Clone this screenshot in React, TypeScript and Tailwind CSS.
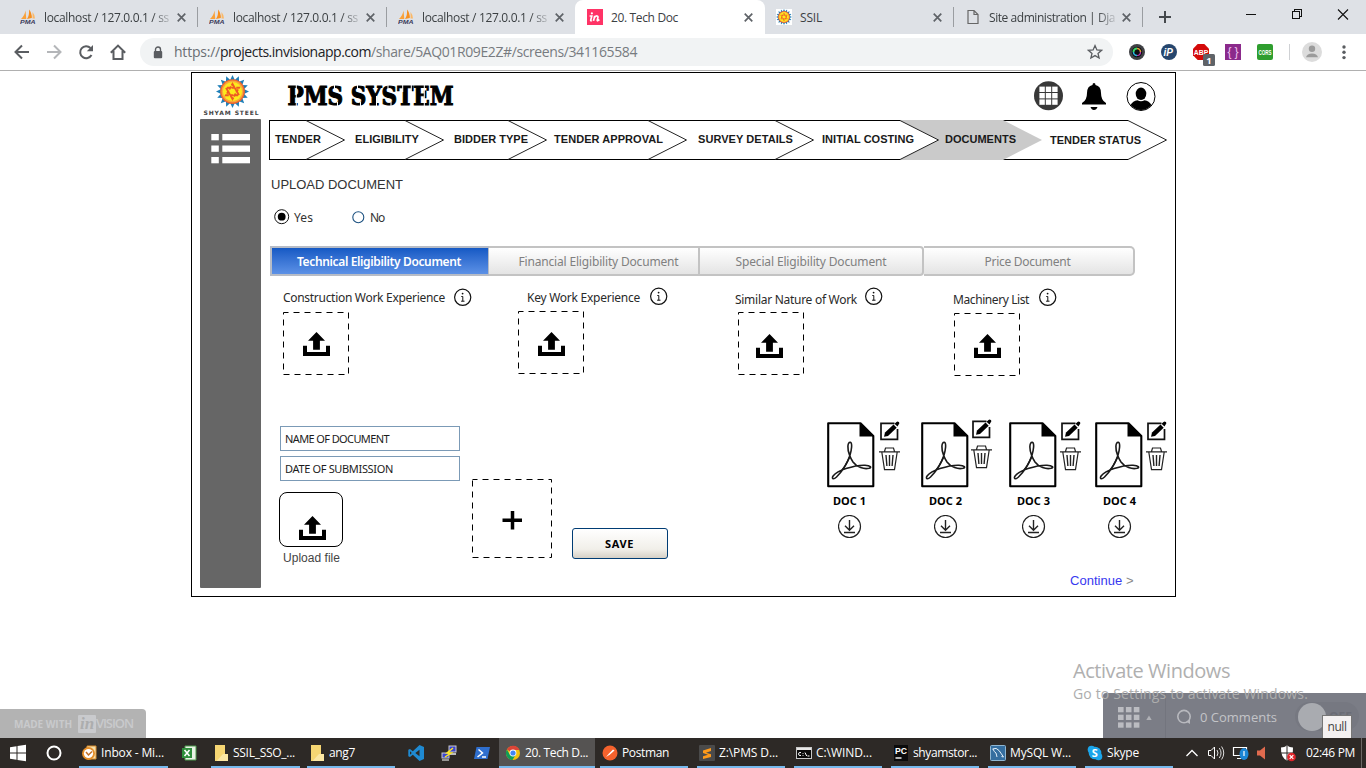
import React, { useLayoutEffect, useRef, useState } from "react";

const OPEN = "font-['Open_Sans','Noto_Sans',sans-serif]";
const NOTO = "font-['Noto_Sans','Open_Sans',sans-serif]";
const ARIAL = "font-['Liberation_Sans',Arial,sans-serif]";

/* Single-line text whose tracking is adjusted so that it fills a given width. */
function Fit({ w, className = "", children }: { w: number; className?: string; children: string }) {
  const ref = useRef<HTMLSpanElement>(null);
  const [gap, setGap] = useState(0);
  useLayoutEffect(() => {
    if (ref.current) {
      const natural = ref.current.getBoundingClientRect().width;
      setGap((w - natural) / Math.max(1, children.length));
    }
  }, [w, children]);
  return (
    <span className={`inline-block shrink-0 overflow-visible whitespace-pre ${className}`} style={{ width: w }}>
      <span ref={ref} style={{ letterSpacing: gap }}>
        {children}
      </span>
    </span>
  );
}

/* ---------- browser chrome ---------- */

function PmaIcon() {
  return (
    <svg width="16" height="16" viewBox="0 0 16 16" className="shrink-0">
      <path d="M5.500 1.500L6.300 10H1Q4.500 7 5.500 1.500z" fill="#f9a13a" />
      <path d="M9 .5Q12 4 11.800 9L7 10Q9.600 6 9 .5z" fill="#f78f1e" />
      <path d="M12.500 3Q15 6 15 9.500L12.600 9.500z" fill="#fbb867" />
      <text x="0" y="15.300" fontSize="6" fontWeight="bold" fontStyle="italic" fill="#3b3a5b" textLength="15.500" lengthAdjust="spacingAndGlyphs" fontFamily="Liberation Sans">
        PMA
      </text>
    </svg>
  );
}

function SunIcon({ size }: { size: number }) {
  const rays = Array.from({ length: 16 }, (_, i) => i * 22.5);
  return (
    <svg width={size} height={size} viewBox="0 0 32 32" className="shrink-0">
      {rays.map((a) => (
        <path key={a} d="M13.400 5.500L16 0L18.600 5.500z" fill="#1e7fb8" transform={`rotate(${a} 16 16)`} />
      ))}
      <circle cx="16" cy="16" r="12" fill="#f0642c" />
      <circle cx="16" cy="16" r="10.600" fill="#f7a83b" />
      <circle cx="16" cy="16" r="9.300" fill="#fdea1c" />
      <path d="M16 8.700L22.300 19.600H9.700zM16 23.300L9.700 12.400H22.300z" fill="none" stroke="#ee5a24" strokeWidth="1.800" strokeDasharray="3.500 1" />
    </svg>
  );
}

function InIcon() {
  return (
    <svg width="16" height="16" viewBox="0 0 16 16" className="shrink-0">
      <rect width="16" height="16" fill="#ff3366" />
      <circle cx="4.900" cy="4.300" r="1.100" fill="#fff" />
      <path d="M2.600 7h2.200l-1.100 4.200q-.2 1.100 1.100.1M7.700 6.900l-1.200 5M7 9.500q1.300-2.900 3.200-2.500 1.200.3.500 2.500l-.5 1.800q0 1.200 2.200-.6" fill="none" stroke="#fff" strokeWidth="1.700" />
    </svg>
  );
}

function FileIcon() {
  return (
    <svg width="16" height="16" viewBox="0 0 16 16" className="shrink-0">
      <path d="M3 1.500h6l4 4v9H3zM9 1.500v4h4" fill="none" stroke="#666" strokeWidth="1.200" />
    </svg>
  );
}

function CloseX() {
  return (
    <svg width="9" height="9" viewBox="0 0 10 10" className="shrink-0">
      <path d="M.8.8l8.400 8.400M9.200.8L.8 9.200" stroke="#5f6368" strokeWidth="1.900" />
    </svg>
  );
}

interface TabData {
  icon: React.ReactNode;
  text: string;
  w: number;
  active?: boolean;
  sep?: boolean;
  fade?: boolean;
}

function Tab({ icon, text, w, active, sep, fade }: TabData) {
  return (
    <div
      className={`-mr-px flex h-[34px] w-[190px] shrink-0 items-center pl-3 ${active ? "rounded-t-lg bg-white" : ""} ${
        sep ? "bg-[linear-gradient(#9a9da1,#9a9da1)] bg-[length:1px_20px] bg-[position:right_7px] bg-no-repeat" : ""
      }`}
    >
      {icon}
      <div className={`ml-2 w-[126px] overflow-hidden pb-[2px] ${fade ? "[mask-image:linear-gradient(to_right,#000_108px,transparent_130px)]" : ""}`}>
        <Fit w={w} className="text-[12px] leading-[20px] text-[#3c4043]">
          {text}
        </Fit>
      </div>
      <div className="ml-[7px] flex">
        <CloseX />
      </div>
    </div>
  );
}

function TabStrip() {
  const pma = { icon: <PmaIcon />, text: "localhost / 127.0.0.1 / ss", w: 125, fade: true };
  return (
    <div className={`flex h-[34px] bg-[#dee1e6] pl-2 ${OPEN}`}>
      <Tab {...pma} sep />
      <Tab {...pma} sep />
      <Tab {...pma} />
      <Tab icon={<InIcon />} text="20. Tech Doc" w={67} active />
      <Tab icon={<div className="flex bg-white"><SunIcon size={16} /></div>} text="SSIL" w={22} sep />
      <Tab icon={<FileIcon />} text="Site administration | Dja" w={126} sep fade />
      <svg width="224" height="34" viewBox="1142 0 224 34" fill="none">
        <path d="M1165 11v12M1159 17h12" stroke="#45494d" strokeWidth="2" />
        <g stroke="#111" strokeWidth="1" shapeRendering="crispEdges">
          <path d="M1246 14.500h10" />
          <path d="M1292.500 11.500h7v7h-7zM1294.500 11.500v-2h7v7h-2" />
        </g>
        <path d="M1338 9.500l10 10M1348 9.500l-10 10" stroke="#111" strokeWidth="1.100" />
      </svg>
    </div>
  );
}

function Toolbar() {
  return (
    <div className={`flex h-[37px] items-center border-b border-[#b0b0b0] bg-white ${OPEN}`}>
      <svg width="140" height="36" viewBox="0 34 140 36" fill="none" strokeWidth="2" className="shrink-0">
        <path d="M29 52H16M22 45.500L15.500 52l6.500 6.500" stroke="#5a5d61" />
        <path d="M47 52h13M54 45.500L60.500 52l-6.500 6.500" stroke="#b4b6b9" />
        <path d="M91.500 55A6 6 0 1 1 90.500 48" stroke="#5a5d61" />
        <path d="M93 45v6.200h-6.200z" fill="#5a5d61" />
        <path d="M110.800 52.800L118 45.600l7.200 7.200M113.500 51v8h9v-8" stroke="#5a5d61" />
      </svg>
      <div className="flex h-7 w-[973px] shrink-0 items-center rounded-full bg-[#f1f3f4] pl-[13px]">
        <svg width="10" height="13" viewBox="0 0 10 13">
          <path d="M2.500 5.500V3.500a2.500 2.500 0 0 1 5 0v2" fill="none" stroke="#5a5d61" strokeWidth="1.400" />
          <rect x=".8" y="5" width="8.400" height="7.300" rx="1" fill="#5a5d61" />
        </svg>
        <div className="ml-[11px] flex text-[14px] leading-[20px]">
          <Fit w={46} className="text-[#6a6e73]">https://</Fit>
          <Fit w={151} className="text-[#202124]">projects.invisionapp.com</Fit>
          <Fit w={266} className="text-[#777b80]">/share/5AQ01R09E2Z#/screens/341165584</Fit>
        </div>
        <svg width="16" height="16" viewBox="0 0 16 16" className="mr-[10px] ml-auto">
          <path d="M8 1.600l1.900 4.300 4.700.4-3.600 3.100 1.100 4.600L8 11.600 3.900 14 5 9.400 1.400 6.300l4.700-.4z" fill="none" stroke="#5a5d61" strokeWidth="1.300" />
        </svg>
      </div>
      <svg width="253" height="36" viewBox="1113 34 253 36" className="shrink-0">
        <circle cx="1137" cy="52" r="8" fill="#3f4044" />
        <circle cx="1137" cy="52" r="5.200" fill="#0c0c10" />
        <path d="M1133.500 52a3.500 3.500 0 0 1 3.500-3.500" stroke="#3ad86a" strokeWidth="2" fill="none" />
        <path d="M1137 48.500a3.500 3.500 0 0 1 3.500 3.500" stroke="#e3a13a" strokeWidth="1.600" fill="none" />
        <path d="M1133.500 52a3.500 3.500 0 0 0 3.500 3.500" stroke="#2ab6e0" strokeWidth="1.600" fill="none" />
        <path d="M1137 55.500a3.500 3.500 0 0 0 3.500-3.500" stroke="#c13ab8" strokeWidth="1.200" fill="none" />
        <circle cx="1169" cy="52" r="8" fill="#26466d" />
        <text x="1163.500" y="56" fontSize="10" fontWeight="bold" fontStyle="italic" fill="#fff" fontFamily="Liberation Sans">iP</text>
        <path d="M1197.700 44h6.600l4.700 4.700v6.600l-4.700 4.700h-6.600l-4.700-4.700v-6.600z" fill="#d40a0a" />
        <text x="1193.800" y="55" fontSize="8" fontWeight="bold" fill="#fff" textLength="14.500" lengthAdjust="spacingAndGlyphs" fontFamily="Liberation Sans">ABP</text>
        <rect x="1203" y="54" width="12" height="12" rx="1.500" fill="#5f6368" />
        <text x="1206.200" y="63.500" fontSize="9.500" fontWeight="bold" fill="#fff" fontFamily="Open Sans">1</text>
        <rect x="1225" y="44" width="16" height="16" fill="#8b2a8b" />
        <text x="1227.500" y="56" fontSize="12" fill="#eec3ee" textLength="11" fontFamily="Liberation Sans">{"{}"}</text>
        <rect x="1257" y="44" width="16" height="16" rx="2" fill="#2f9e2f" />
        <text x="1258.500" y="54.500" fontSize="7" fontWeight="bold" fill="#fff" textLength="13" lengthAdjust="spacingAndGlyphs" fontFamily="Liberation Sans">CORS</text>
        <path d="M1289.500 44v16" stroke="#cfd1d4" />
        <circle cx="1312" cy="52" r="10" fill="#dcdcdc" />
        <circle cx="1312" cy="48.700" r="3.200" fill="#9b9b9b" />
        <path d="M1306 57.300q1-3.800 6-3.800t6 3.800z" fill="#9b9b9b" />
        <g fill="#5a5d61">
          <circle cx="1344" cy="47" r="1.700" />
          <circle cx="1344" cy="52.300" r="1.700" />
          <circle cx="1344" cy="57.600" r="1.700" />
        </g>
      </svg>
    </div>
  );
}

/* ---------- prototype page ---------- */

function Wordmark() {
  return (
    <svg width="180" height="26" viewBox="0 0 180 26">
      <text
        x="0.500"
        y="22"
        fontFamily="DejaVu Serif, serif"
        fontWeight="bold"
        fontSize="26"
        stroke="#000"
        strokeWidth="1.100"
        textLength="166"
        lengthAdjust="spacingAndGlyphs"
      >
        PMS SYSTEM
      </text>
      <g stroke="#fff" strokeWidth="1">
        <path d="M9.300 1v23M47.500 1v5M50.500 19v5M70.500 1v5M73.500 19v5M89.500 13v11M101 1v5M104 19v5M115.700 1v8M124.300 1v8M137.300 1v23" />
      </g>
    </svg>
  );
}

function HeaderIcons() {
  return (
    <div className="mr-[19px] ml-auto flex">
      <svg width="30" height="30" viewBox="0 0 30 30">
        <circle cx="14.500" cy="14.700" r="14.500" fill="#383838" />
        <g fill="#fff">
          {[5.600, 12, 18.400].map((y) => [5.400, 11.800, 18.200].map((x) => <rect key={`${x}-${y}`} x={x} y={y} width="5.400" height="5.400" />))}
        </g>
      </svg>
      <svg width="24" height="28" viewBox="0 0 24 28" className="mt-[2px] ml-[18px]">
        <path d="M12 0q1.500 0 1.500 2 5.500 1.200 5.500 8 0 7.500 5 10v1.500H0V20q5-2.500 5-10 0-6.800 5.500-8 0-2 1.500-2zM8.500 24h7q-1 3-3.500 3t-3.500-3z" />
      </svg>
      <svg width="30" height="30" viewBox="0 0 30 30" className="mt-[1px] ml-[20px]">
        <circle cx="15" cy="14.500" r="14" fill="#fff" stroke="#000" strokeWidth="1" />
        <ellipse cx="15" cy="11.800" rx="5.300" ry="6.200" />
        <path d="M4.500 23q2.300-4 7-4.800 3.500 2 7 0 4.700.8 7 4.800-4.300 5-10.500 5T4.500 23z" />
      </svg>
    </div>
  );
}

interface StepData {
  label: string;
  w: string;
  pad: string;
  tw: number;
  kind?: "current" | "after" | "first";
}

const STEPS: StepData[] = [
  { label: "TENDER", w: "w-[37px]", pad: "pl-[5px]", tw: 46, kind: "first" },
  { label: "ELIGIBILITY", w: "w-[99px]", pad: "pl-[10px]", tw: 64 },
  { label: "BIDDER TYPE", w: "w-[103px]", pad: "pl-[10px]", tw: 74 },
  { label: "TENDER APPROVAL", w: "w-[140px]", pad: "pl-[7px]", tw: 109 },
  { label: "SURVEY DETAILS", w: "w-[127px]", pad: "pl-[11px]", tw: 95 },
  { label: "INITIAL COSTING", w: "w-[125px]", pad: "pl-[8px]", tw: 92 },
  { label: "DOCUMENTS", w: "w-[103px]", pad: "pl-[6px]", tw: 71, kind: "current" },
  { label: "TENDER STATUS", w: "w-[125px]", pad: "pl-[8px]", tw: 91, kind: "after" },
];

function Steps() {
  return (
    <div className={`flex h-10 pl-2 text-[11px] font-bold text-[#1a1a1a] ${ARIAL}`}>
      {STEPS.map((s) => (
        <div
          key={s.label}
          className={`box-border flex h-10 shrink-0 items-center ${s.w} ${
            s.kind === "current" ? "bg-[#cacaca]" : "bg-[linear-gradient(#000,#000),linear-gradient(#000,#000)] bg-[length:100%_1px] bg-[position:0_0,0_100%] bg-no-repeat"
          } ${s.kind === "first" ? "border-l border-black" : ""}`}
        >
          {s.kind !== "first" && (
            <svg width="39" height="40" viewBox="0 0 39 40" className="shrink-0">
              {s.kind === "after" ? (
                <path d="M0 0L39 20L0 40z" fill="#cacaca" />
              ) : (
                <path d="M0 .5L38.500 20L0 39.500" fill={s.kind === "current" ? "#fff" : "none"} stroke="#222" strokeWidth="1" />
              )}
            </svg>
          )}
          <div className={`relative z-10 ${s.pad} ${s.kind === "after" ? "" : "pb-[1px]"}`}>
            <Fit w={s.tw} className="leading-[14px]">
              {s.label}
            </Fit>
          </div>
        </div>
      ))}
      <svg width="39" height="40" viewBox="0 0 39 40" className="shrink-0">
        <path d="M0 .5L38.500 20L0 39.500" fill="none" stroke="#222" />
      </svg>
    </div>
  );
}

function DocTabs() {
  const tab = "flex h-[30px] items-center justify-center border-y-2 border-r-2 border-[#c3c3c3] bg-linear-to-b from-white to-[#e4e4e4] pt-[2px] text-[#808080]";
  return (
    <div className={`ml-[9px] flex h-[30px] text-[12px] leading-[16px] ${NOTO}`}>
      <div className="flex h-[30px] w-[219px] items-center justify-center border-2 border-r border-[#b7bcc6] bg-linear-to-b from-[#1459c4] to-[#5c91e6] pt-[2px] pr-[2px] text-white">
        <Fit w={164} className="font-semibold">Technical Eligibility Document</Fit>
      </div>
      <div className={`${tab} w-[211px] pl-[10px]`}>
        <Fit w={160}>Financial Eligibility Document</Fit>
      </div>
      <div className={`${tab} w-[224px] rounded-r-[4px]`}>
        <Fit w={151}>Special Eligibility Document</Fit>
      </div>
      <div className={`${tab} w-[211px] rounded-r-[5px] pr-[2px]`}>
        <Fit w={86}>Price Document</Fit>
      </div>
    </div>
  );
}

function InfoIcon() {
  return (
    <svg width="18" height="18" viewBox="0 0 18 18" className="shrink-0">
      <circle cx="8.700" cy="9.300" r="8.100" fill="none" stroke="#111" strokeWidth="1.200" />
      <circle cx="8.600" cy="5.600" r=".9" fill="#111" />
      <path d="M7.300 8.500h1.500v4.700M7.100 13.200h3.400" fill="none" stroke="#111" strokeWidth="1" />
    </svg>
  );
}

function UploadIcon() {
  return (
    <svg width="27" height="24" viewBox="0 0 27 24" className="shrink-0">
      <path d="M13.500 0L22 8.700H16.900V17.800H10.100V8.700H5z" />
      <path d="M0 13.700h4v6.300h19v-6.300h4V24H0z" />
    </svg>
  );
}

function Dashed({ w, h }: { w: number; h: number }) {
  return (
    <svg width={w} height={h} className="absolute inset-0">
      <path d={`M.5 .5H${w - 0.5}V${h - 0.5}H.5z`} fill="none" stroke="#000" strokeDasharray="6 5" strokeDashoffset="1" />
    </svg>
  );
}

interface SlotData {
  label: string;
  tw: number;
  cell: string;
  text: string;
  info: string;
  box: string;
  icon: string;
}

const SLOTS: SlotData[] = [
  { label: "Construction Work Experience", tw: 162, cell: "w-[235px]", text: "mt-[3px]", info: "mt-[2px] ml-[9px]", box: "mt-[6px]", icon: "mt-[20px] ml-[20px]" },
  { label: "Key Work Experience", tw: 113, cell: "w-[217px]", text: "mt-[3px] ml-[9px]", info: "mt-[1px] ml-[10px]", box: "mt-[5px]", icon: "mt-[21px] ml-[20px]" },
  { label: "Similar Nature of Work", tw: 122, cell: "w-[218px]", text: "mt-[5px]", info: "mt-[1px] ml-[8px]", box: "mt-[6px] ml-[3px]", icon: "mt-[22px] ml-[18px]" },
  { label: "Machinery List", tw: 76, cell: "w-[200px]", text: "mt-[5px]", info: "mt-[2px] ml-[10px]", box: "mt-[7px] ml-[1px]", icon: "mt-[21px] ml-[20px]" },
];

function Slots() {
  return (
    <div className={`mt-[10px] ml-[22px] flex h-[92px] text-[12px] leading-[18px] text-[#2a2a2a] ${NOTO}`}>
      {SLOTS.map((s) => (
        <div key={s.label} className={`shrink-0 ${s.cell}`}>
          <div className="flex h-[20px] items-start">
            <Fit w={s.tw} className={s.text}>
              {s.label}
            </Fit>
            <div className={`flex ${s.info}`}>
              <InfoIcon />
            </div>
          </div>
          <div className={`relative flex h-[63px] w-[66px] ${s.box}`}>
            <Dashed w={66} h={63} />
            <div className={s.icon}>
              <UploadIcon />
            </div>
          </div>
        </div>
      ))}
    </div>
  );
}

function PdfIcon() {
  return (
    <svg width="48" height="66" viewBox="0 0 48 66" fill="none" className="shrink-0">
      <path d="M1.200 1.200H33.500L46.300 14V64.300H1.200z" stroke="#000" strokeWidth="2.100" strokeLinejoin="round" />
      <path d="M32.500 1L47 14.500H32.500z" fill="#000" />
      <path
        d="M22.500 33C20.200 27 20.300 20 23.300 20.200C25.600 20.800 24.600 28 22.900 33.500C20 42 14.500 50 9.500 55C6 58.300 4.300 56.500 6.300 53.800C9 50.500 14 48.300 19 46.600C26 44.300 33 43 38 43.200C43.500 43.500 45.300 45.500 42 46.300C37 47.300 30 45.500 26 40C24 37 23.200 35 22.500 33z"
        stroke="#1a1a1a"
        strokeWidth="1.600"
      />
      <path d="M22.500 35.500q-3.500 8-8.500 14" stroke="#1a1a1a" strokeWidth="1.600" />
    </svg>
  );
}

function EditIcon() {
  return (
    <svg width="21" height="20" viewBox="0 0 21 20" fill="none">
      <path d="M14.500 2.300H1V18.300H17.500V8" stroke="#111" strokeWidth="1.700" />
      <path d="M5 11.600L13.500 3.500l3.200 3.200L8 15 4 15.800z" fill="#000" />
      <path d="M14.500 2.700L16.500 .9q1.200-1 2.300.2 1 1.200 0 2.200L17.500 5.600z" fill="#000" />
    </svg>
  );
}

function TrashIcon() {
  return (
    <svg width="21" height="24" viewBox="0 0 21 24" fill="none" stroke="#222" strokeWidth="1.200">
      <path d="M0 4.800H21M5.500 4.500L6.500 1h8l1 3.500M2.800 5L5.500 22.700H15.500L18.200 5" />
      <path d="M7 8l.9 11M10.500 8v11M14 8l-.9 11" strokeWidth="1.400" />
    </svg>
  );
}

function DownloadIcon() {
  return (
    <svg width="24" height="24" viewBox="0 0 24 24" fill="none" stroke="#222" strokeWidth="1.200">
      <circle cx="11.500" cy="11.500" r="11" />
      <path d="M11.500 5v10M7 10.700l4.500 4.500 4.500-4.500M6 17.500h11" strokeWidth="1.400" />
    </svg>
  );
}

const DOCS = [
  { name: "DOC 1", w: "w-[94px]", act: "ml-[4px]", lift: "", tx: "pl-[6px]", dx: "pl-[11px]" },
  { name: "DOC 2", w: "w-[88px]", act: "ml-[2px]", lift: "-mt-[2px]", tx: "pl-[8px]", dx: "pl-[13px]" },
  { name: "DOC 3", w: "w-[86px]", act: "ml-[3px]", lift: "", tx: "pl-[8px]", dx: "pl-[13px]" },
  { name: "DOC 4", w: "w-[80px]", act: "ml-[3px]", lift: "", tx: "pl-[8px]", dx: "pl-[13px]" },
];

function Docs() {
  return (
    <div className={`flex ${NOTO}`}>
      {DOCS.map((d) => (
        <div key={d.name} className={`shrink-0 ${d.w}`}>
          <div className="flex h-[66px]">
            <PdfIcon />
            <div className={`flex flex-col ${d.act} ${d.lift}`}>
              <div className="-mt-[1px] ml-[1px] h-[26px]">
                <EditIcon />
              </div>
              <TrashIcon />
            </div>
          </div>
          <div className={`mt-[4px] flex h-[18px] items-center ${d.tx}`}>
            <Fit w={33} className="text-[11px] leading-[18px] font-bold">
              {d.name}
            </Fit>
          </div>
          <div className={`mt-[5px] ${d.dx}`}>
            <DownloadIcon />
          </div>
        </div>
      ))}
    </div>
  );
}

function Form() {
  const field = "flex h-[25px] w-[180px] items-center border border-[#7b9ab6] pt-[2px] pl-[4px] text-[11px] text-[#1c1c1c]";
  return (
    <div className={`flex h-[172px] w-[547px] shrink-0 pl-[18px] ${NOTO}`}>
      <div className="w-[193px] pt-[5px]">
        <div className={`ml-[1px] ${field}`}>
          <Fit w={104}>NAME OF DOCUMENT</Fit>
        </div>
        <div className={`mt-[5px] ml-[1px] ${field}`}>
          <Fit w={108}>DATE OF SUBMISSION</Fit>
        </div>
        <div className="mt-[11px] flex h-[55px] w-[64px] rounded-[8px] border border-black pt-[23px] pl-[19px]">
          <UploadIcon />
        </div>
        <div className={`mt-[3px] ml-[4px] flex text-[12px] leading-[16px] text-[#444] ${ARIAL}`}>
          <Fit w={57}>Upload file</Fit>
        </div>
      </div>
      <div className="relative mt-[58px] h-[79px] w-[80px]">
        <Dashed w={80} h={79} />
        <svg width="80" height="79">
          <path d="M40.500 32v18.500M30.500 41.300h19.500" stroke="#000" strokeWidth="3.500" />
        </svg>
      </div>
      <div className="mt-[107px] ml-[20px] flex h-[31px] w-[96px] items-center justify-center rounded-[3px] border border-[#003c74] bg-linear-to-b from-white via-[#f1efe9] via-70% to-[#d6d0c6] pt-[2px] pr-px">
        <Fit w={29} className="text-[11px] font-bold">SAVE</Fit>
      </div>
    </div>
  );
}

function Prototype() {
  return (
    <div className="mt-[1px] ml-[191px] flex h-[525px] w-[985px] border border-black bg-white pl-2">
      <aside className="flex w-[61px] shrink-0 flex-col">
        <div className="flex h-[46px] flex-col items-center pt-[2px]">
          <div className="flex pl-[4px]">
            <SunIcon size={33} />
          </div>
          <Fit w={56} className="mt-px ml-[2px] text-[6px] leading-[8px] font-bold text-[#444] font-['DejaVu_Sans',sans-serif]">
            SHYAM STEEL
          </Fit>
        </div>
        <div className="flex h-[469px] justify-center rounded-[1px] bg-[#666] pt-[15px]">
          <svg width="39" height="30" viewBox="0 0 39 30" fill="#fff">
            {[0, 11.500, 23].map((y) => (
              <g key={y}>
                <rect x="0.300" y={y} width="7.500" height="6.300" />
                <rect x="11.300" y={y} width="27.700" height="6.300" />
              </g>
            ))}
          </svg>
        </div>
      </aside>
      <main className="flex w-[914px] shrink-0 flex-col">
        <header className="flex h-[47px] pt-[8px] pl-[26px]">
          <div className="pt-[2px]">
            <Wordmark />
          </div>
          <HeaderIcons />
        </header>
        <Steps />
        <div className="mt-[17px] flex h-[16px] pl-[10px]">
          <Fit w={132} className={`text-[13px] leading-[16px] text-[#333] ${ARIAL}`}>UPLOAD DOCUMENT</Fit>
        </div>
        <div className={`mt-[15px] flex h-[18px] items-center pl-[13px] text-[12px] leading-[18px] text-[#333] ${NOTO}`}>
          <svg width="16" height="16" viewBox="0 0 16 16">
            <circle cx="7.700" cy="7.700" r="7" fill="none" stroke="#111" />
            <circle cx="7.700" cy="7.700" r="3.900" />
          </svg>
          <Fit w={19} className="mt-[2px] ml-[4px]">Yes</Fit>
          <svg width="13" height="13" viewBox="0 0 13 13" className="ml-[39px]">
            <circle cx="6.300" cy="6.200" r="5.500" fill="none" stroke="#1c5180" strokeWidth="1.100" />
          </svg>
          <Fit w={14} className="mt-[2px] ml-[5px]">No</Fit>
        </div>
        <div className="h-[20px]" />
        <DocTabs />
        <Slots />
        <div className="mt-[43px] flex">
          <Form />
          <div className="ml-[19px] pt-[1px]">
            <Docs />
          </div>
        </div>
        <div className={`-mt-[20px] flex justify-end pr-[41px] text-[13px] leading-[16px] ${ARIAL}`}>
          <Fit w={56} className="text-[#3838f0]">Continue </Fit>
          <Fit w={8} className="text-[#888]">{">"}</Fit>
        </div>
      </main>
    </div>
  );
}

/* ---------- floating bars ---------- */

function MadeWith() {
  return (
    <div className={`absolute bottom-[30px] left-0 flex h-[29px] w-[146px] items-center rounded-tr-[4px] bg-[#b3b3b3] pl-[14px] text-[#c9cacc] ${OPEN}`}>
      <Fit w={58} className="mt-[2px] text-[10px] font-bold">MADE WITH</Fit>
      <div className="mt-px ml-[6px] flex h-[18px] w-[18px] items-center justify-center rounded-[1px] bg-[#c9cacd] font-['Liberation_Serif',serif] text-[17px] leading-[16px] font-bold text-[#acadae] italic">
        in
      </div>
      <Fit w={37} className="mt-px text-[13px] font-semibold">VISION</Fit>
    </div>
  );
}

function CommentBar() {
  return (
    <div className={`absolute right-0 bottom-[30px] flex h-[45px] w-[263px] items-center rounded-tl-[3px] bg-[#7b7d86] ${OPEN}`}>
      <svg width="63" height="45" viewBox="0 0 63 45">
        {[14, 21.700, 29.400].map((y) => [15, 22.900, 30.800].map((x) => <rect key={`${x}-${y}`} x={x} y={y} width="5.600" height="5.300" fill="#bbbcc1" />))}
        <path d="M43.300 27L46 22.500l2.700 4.500z" fill="#b0b1b6" />
        <path d="M62.500 0v45" stroke="#73757e" />
      </svg>
      <svg width="16" height="18" viewBox="0 0 16 18" className="mt-[3px] ml-[10px]">
        <circle cx="8" cy="8.600" r="6.200" fill="none" stroke="#b8b9be" strokeWidth="1.600" />
        <path d="M10 13.500l4 2.500v-4.500z" fill="#b8b9be" />
      </svg>
      <Fit w={77} className="mt-[4px] ml-[8px] text-[13px] text-[#c3c4c8]">0 Comments</Fit>
      <div className="mt-[2px] ml-[18px] flex h-[29px] w-[64px] items-center rounded-full bg-[#767881] pl-[3px]">
        <div className="h-[28px] w-[28px] shrink-0 rounded-full bg-[#a9abb0]" />
        <span className="ml-[3px] text-[12px] leading-[14px] font-bold text-[#6a6c75]">OFF</span>
      </div>
    </div>
  );
}

function Watermark() {
  return (
    <div className={`absolute top-[658px] left-[1073px] flex flex-col ${OPEN}`}>
      <Fit w={157} className="text-[20px] leading-[26px] text-[#b0b0b0]">Activate Windows</Fit>
      <Fit w={235} className="text-[14px] leading-[20px] text-[#adadad]">Go to Settings to activate Windows.</Fit>
    </div>
  );
}

/* ---------- taskbar ---------- */

const TASK_ICONS: Record<string, React.ReactNode> = {
  inbox: (
    <>
      <path d="M6 1h9v13H6z" fill="#f5dfae" stroke="#d98d2b" />
      <circle cx="7.500" cy="8.500" r="6.500" fill="#e58f2a" />
      <circle cx="7.500" cy="8.500" r="4.600" fill="#fff" />
      <path d="M5 7l2.500 3L11 6.500" stroke="#c0702a" strokeWidth="1.500" fill="none" />
    </>
  ),
  excel: (
    <>
      <path d="M4 1h11v14H4z" fill="#e9f3e6" stroke="#4d9a4d" />
      <rect x="1" y="3" width="10" height="10" fill="#2f8f3c" />
      <path d="M3.500 5l5 6M8.500 5l-5 6" stroke="#fff" strokeWidth="1.600" />
    </>
  ),
  folder: (
    <>
      <path d="M2 0h10v16H2z" fill="#f6d673" />
      <path d="M10 9h5v7H3.500z" fill="#fbe7a4" />
    </>
  ),
  vscode: (
    <>
      <path d="M11.500 0L16 2v12l-4.500 2L4.800 9.800 2 12 .3 11.200V4.800L2 4l2.800 2.200z" fill="#1f8ad2" />
      <path d="M11.500 4.800v6.400L7.300 8zM2 6.200v3.600L3.800 8z" fill="#2d2926" />
    </>
  ),
  putty: (
    <>
      <rect x="8" y="1" width="7" height="6" fill="#3b45d0" stroke="#ccc" />
      <path d="M9 9h6" stroke="#bbb" strokeWidth="2" />
      <rect x="1" y="8" width="7" height="5" fill="#3b45d0" stroke="#ccc" />
      <path d="M1 15h7" stroke="#bbb" strokeWidth="1.500" />
      <path d="M12 3L6 8h4l-6 4" stroke="#ffe921" strokeWidth="1.500" fill="none" />
    </>
  ),
  ps: (
    <>
      <path d="M2.500 2H16l-2.500 12H0z" fill="#2f6fce" />
      <path d="M4.500 4.500L8.500 8l-5 4M8 12h4" stroke="#fff" strokeWidth="1.500" fill="none" />
    </>
  ),
  chrome: (
    <>
      <circle cx="8" cy="8" r="7" fill="#f4c20d" />
      <path d="M8 8L1.900 4.500A7 7 0 0 1 14.500 5H8z" fill="#db4437" />
      <path d="M8 8L4.900 9.800 1.900 4.500A7 7 0 0 0 7.500 15l3-5z" fill="#0f9d58" />
      <circle cx="8" cy="8" r="3.400" fill="#fff" />
      <circle cx="8" cy="8" r="2.600" fill="#4285f4" />
    </>
  ),
  postman: (
    <>
      <circle cx="8" cy="8" r="7.500" fill="#f4622d" />
      <path d="M4 12l3-3.500L11 4.500l1.500 1L8 9.500z" fill="#fff" />
    </>
  ),
  sublime: (
    <>
      <rect width="16" height="16" rx="1" fill="#4a4a4a" />
      <path d="M4 5.500l8-2.500v3L7 7.700l5 1.600v2.700L4 14v-2.700l5-1.600-5-1.600z" fill="#ff9a1a" />
    </>
  ),
  cmd: (
    <>
      <rect x=".5" y="2.500" width="15" height="11" fill="#0a0a0a" stroke="#c8c8c8" />
      <path d="M1 4h14" stroke="#e8e8e8" strokeWidth="2" />
      <path d="M5 7.500q-2.500-.5-2.500 1.500T5 10.500M7 8v.8M7 10v.8M9 7.500l1.700 3.500M11.500 11h2" stroke="#fff" fill="none" />
    </>
  ),
  mysql: (
    <>
      <rect x=".5" y=".5" width="15" height="15" rx="1" fill="#356e9f" stroke="#8fb6d2" />
      <path d="M2.500 4q4-2 6.500 1.500T13.500 12l-2-.5M3 4q1 3 3 4l1 4" stroke="#e4eff8" fill="none" />
    </>
  ),
};

function TaskIcon({ name }: { name: string }) {
  if (name === "pc")
    return (
      <svg width="16" height="16" viewBox="0 0 16 16" className="shrink-0">
        <rect x="1" width="14" height="16" fill="#0b0b0b" />
        <text x="2" y="8.500" fontSize="9" fontWeight="bold" fill="#fff" textLength="12" lengthAdjust="spacingAndGlyphs" fontFamily="Liberation Sans">PC</text>
        <path d="M2.500 13h6" stroke="#fff" strokeWidth="1.400" />
      </svg>
    );
  if (name === "skype")
    return (
      <svg width="16" height="16" viewBox="0 0 16 16" className="shrink-0">
        <circle cx="8" cy="8" r="6.300" fill="#1ba5ea" />
        <circle cx="4.500" cy="4.500" r="3.800" fill="#1ba5ea" />
        <circle cx="11.500" cy="11.500" r="3.800" fill="#1ba5ea" />
        <text x="4.700" y="12" fontSize="11" fontWeight="bold" fill="#fff" fontFamily="Open Sans">S</text>
      </svg>
    );
  return (
    <svg width="16" height="16" viewBox="0 0 16 16" className="shrink-0">
      {TASK_ICONS[name]}
    </svg>
  );
}

function Task({ icon, text, tw, w = "w-[89px]", gap = "mr-[9px]", active }: { icon: string; text: string; tw: number; w?: string; gap?: string; active?: boolean }) {
  return (
    <div className={`flex h-[30px] shrink-0 items-center border-b-2 border-[#76b9ed] ${active ? "pl-[6px]" : "pl-[2px]"} ${w} ${gap} ${active ? "bg-[#555352]" : ""}`}>
      <div className="mt-[2px] flex">
        <TaskIcon name={icon} />
      </div>
      <Fit w={tw} className="mt-[2px] ml-[4px] leading-[20px]">
        {text}
      </Fit>
    </div>
  );
}

function Taskbar() {
  return (
    <div className={`absolute bottom-0 left-0 flex h-[30px] w-[1366px] items-center bg-[#2d2926] text-[12px] text-white ${OPEN}`}>
      <svg width="79" height="30" viewBox="0 0 79 30" className="shrink-0">
        <path d="M10 9.200l6.500-1v6.300H10zM17.500 8l8.500-1.200v7.700h-8.500zM10 15.500h6.500v6.300l-6.500-1zM17.500 15.500H26v7.700l-8.500-1.200z" fill="#fff" />
        <circle cx="54" cy="15" r="6.500" fill="none" stroke="#fff" strokeWidth="2" />
      </svg>
      <Task icon="inbox" text="Inbox - Mi..." tw={63} gap="mr-[13px]" />
      <div className="w-[30px]"><TaskIcon name="excel" /></div>
      <Task icon="folder" text="SSIL_SSO_..." tw={62} gap="mr-[7px]" />
      <Task icon="folder" text="ang7" tw={26} w="w-[88px]" gap="mr-[13px]" />
      <div className="flex w-[91px] gap-[17px]">
        <TaskIcon name="vscode" />
        <TaskIcon name="putty" />
        <TaskIcon name="ps" />
      </div>
      <Task icon="chrome" text="20. Tech D..." tw={63} w="w-[96px]" gap="mr-[5px]" active />
      <Task icon="postman" text="Postman" tw={47} w="w-[88px]" />
      <Task icon="sublime" text="Z:\PMS D..." tw={59} w="w-[88px]" />
      <Task icon="cmd" text="C:\WIND..." tw={56} w="w-[88px]" />
      <Task icon="pc" text="shyamstor..." tw={64} w="w-[88px]" />
      <Task icon="mysql" text="MySQL W..." tw={61} w="w-[88px]" />
      <Task icon="skype" text="Skype" tw={32} w="w-[88px]" gap="mr-0" />
      <svg width="130" height="30" viewBox="1173 738 130 30" className="shrink-0" fill="none">
        <path d="M1186.500 756l5.500-5.500 5.500 5.500" stroke="#fff" strokeWidth="1.300" />
        <path d="M1208.500 750.500h2.500l3.500-3.500v12l-3.500-3.500h-2.500z" stroke="#fff" />
        <path d="M1217 750q2 3 0 6M1219.300 748q3.500 5 0 10M1221.600 746.500q4.300 6.500 0 13" stroke="#ddd" />
        <path d="M1233.500 747.500h13v8h-13zM1237 758.500h5" stroke="#fff" strokeWidth="1.200" />
        <ellipse cx="1244" cy="754" rx="4.500" ry="6" fill="#1c86d6" />
        <path d="M1244 751v5" stroke="#fff" strokeWidth="1.200" />
        <path d="M1257 750.500h3l5-4v13l-5-4h-3z" fill="#e06a4e" />
        <path d="M1281 747.500q3.500 0 6-2 2.500 2 6 2 .5 10-6 13-6.500-3-6-13z" fill="#fff" />
        <path d="M1287 746v14M1281 753h12" stroke="#2d2926" />
        <circle cx="1291.500" cy="757" r="4.300" fill="#e0252b" />
        <path d="M1289.700 755.200l3.600 3.600M1293.300 755.200l-3.600 3.600" stroke="#fff" strokeWidth="1.200" />
      </svg>
      <Fit w={49} className="ml-[3px] leading-[20px]">02:46 PM</Fit>
      <div className="ml-[6px] h-[30px] w-px bg-[#6b6865]" />
    </div>
  );
}

export default function App() {
  return (
    <div className="relative h-[768px] w-[1366px] overflow-hidden bg-white">
      <TabStrip />
      <Toolbar />
      <Prototype />
      <MadeWith />
      <CommentBar />
      <Watermark />
      <Taskbar />
      <div className={`absolute top-[715px] left-[1322px] flex h-[23px] w-[30px] items-center justify-center border border-[#767676] border-b-0 bg-[#f4f1f1] text-[#444] ${OPEN}`}>
        <Fit w={19} className="text-[12px]">null</Fit>
      </div>
    </div>
  );
}
